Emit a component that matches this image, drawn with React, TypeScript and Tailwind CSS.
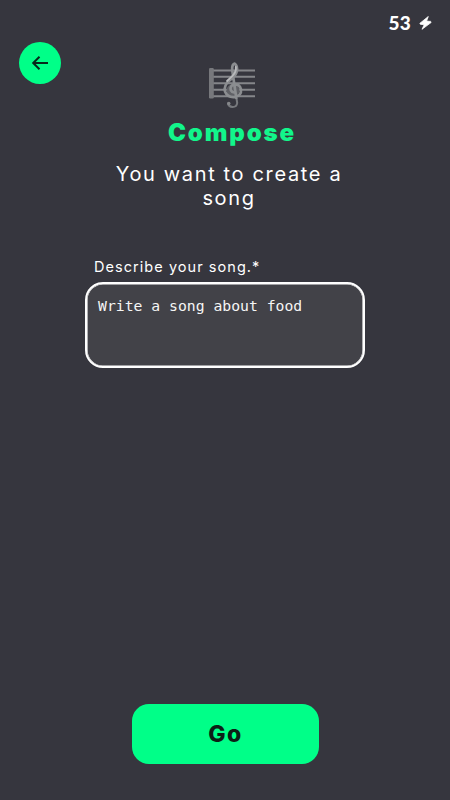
function StaffIcon() {
  return (
    <svg width="48" height="48" viewBox="0 0 48 48" fill="none" aria-hidden="true">
      <g stroke="#85868a" strokeWidth="2">
        <path d="M4 8.4H47M4 14.8H47M4 21.3H47M4 27.8H47M4 34.3H47" />
      </g>
      <rect x="1" y="6" width="4.8" height="30.5" rx="1.2" fill="#77787c" />
      <circle cx="25" cy="28.5" r="6.5" fill="#606166" />
      <g strokeLinecap="round" strokeLinejoin="round">
        <path d="M28.5 36.5L29.2 41Q28.8 45 24.6 45Q20.5 44.6 20 41.5" stroke="#77797d" strokeWidth="2" />
        <path d="M28.3 36L24.2 8Q23.8 2.4 26.6 1.6Q29.8 3.5 28.8 9.5Q27.8 14 21.5 18.5Q15.5 23.5 17 29.5Q19.5 35.8 27 35Q33.6 33.5 33 27.5Q31.8 22 26.5 22.4Q21.5 23.5 22.8 28.2Q23.8 30.3 26 30.5" stroke="#8b8d90" strokeWidth="2.7" />
        <path d="M27.8 5Q28.4 10 24.5 13.8L19 19" stroke="#b9babc" strokeWidth="1.8" />
      </g>
      <circle cx="20.8" cy="41.5" r="1.7" fill="#85878a" />
    </svg>
  );
}

export default function App() {
  return (
    <main className="flex h-[800px] w-[450px] flex-col bg-[#36363e] font-['Inter',sans-serif] text-white">
      <header className="flex h-[84px] items-start justify-between pl-[19px] pr-[18px]">
        <button aria-label="Back" className="mt-[42px] flex size-[42px] items-center justify-center rounded-full bg-[#00ff88] text-[#06291a]">
          <svg width="18" height="16" viewBox="0 0 18 16" fill="none" stroke="currentColor" strokeWidth="2">
            <path d="M17 8H2M8.5 1.8L2.2 8L8.5 14.2" />
          </svg>
        </button>
        <div className="mt-[12px] flex items-center gap-[8px]">
          <span className="font-['Lato',sans-serif] text-[19px] leading-[22px] font-black tracking-[0.2px]">53</span>
          <svg width="13" height="14" viewBox="0 0 13 14" fill="currentColor" stroke="currentColor" strokeWidth=".8" strokeLinejoin="round" aria-hidden="true">
            <path d="M9.3 .5L1 7.2Q.6 8.1 1.4 8.3L5.2 8.7L3 13.3L12 6.6Q12.4 5.7 11.6 5.4L7.6 5.1Z" />
          </svg>
        </div>
      </header>
      <section className="-mt-[22px] flex flex-col items-center">
        <div className="ml-[14px]"><StaffIcon /></div>
        <h1 className="mt-[8px] ml-[14px] text-[24px] leading-[30px] font-black tracking-[1.9px] text-[#12f68b]">Compose</h1>
        <p className="mt-[14px] ml-[8px] w-[260px] text-center text-[20px] leading-[24px] tracking-[1.65px]">You want to create a song</p>
      </section>
      <section className="mt-[47px] ml-[85px] w-[280px]">
        <label htmlFor="song" className="ml-[9px] block text-[14.5px] leading-[20px] tracking-[1.05px]">Describe your song.*</label>
        <textarea id="song" defaultValue="Write a song about food" className="mt-[5px] block h-[86px] w-[280px] resize-none rounded-[18px] border-2 border-white bg-[#424248] px-[11px] py-[12px] font-['DejaVu_Sans_Mono',monospace] text-[14.75px] leading-[20px] text-[#f5f5f5] shadow-[inset_0_0_0_0.6px_white] outline-none" />
      </section>
      <button className="mt-auto mb-[36px] ml-[132px] h-[60px] w-[187px] rounded-[17px] bg-[#00ff88] text-[23px] font-extrabold tracking-[1.5px] text-[#0c1f16]">Go</button>
    </main>
  );
}
